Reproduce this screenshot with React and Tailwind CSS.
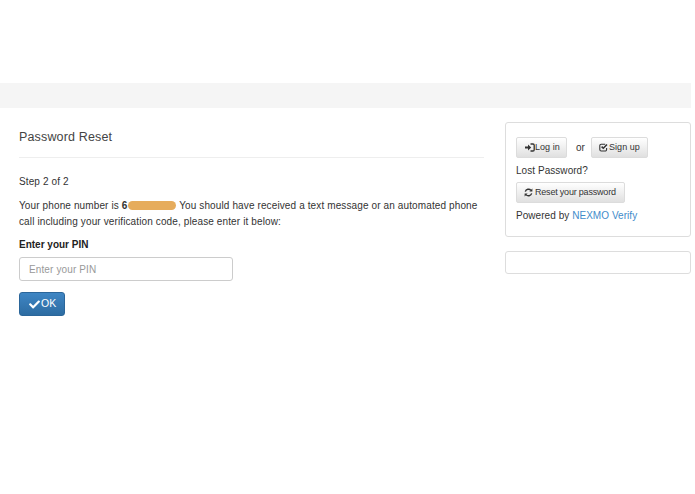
import React from "react";
import { FaCheck } from "react-icons/fa";

const grayBtn =
  "inline-flex items-center whitespace-nowrap h-[21px] rounded-[2px] border border-[#dcdcdc] bg-gradient-to-b from-[#ffffff] to-[#e0e0e0] text-[9px] text-[#333333]";

const LogInIcon = () => (
  <svg width="10" height="9" viewBox="0 0 10 9" fill="none" stroke="#333333" className="shrink-0">
    <path d="M5.5 1H8a1.2 1.2 0 0 1 1.2 1.2v4.6A1.2 1.2 0 0 1 8 8H5.5" strokeWidth="1.3" />
    <path d="M0 3.4h3V1.4l3.2 3.1L3 7.6V5.6H0z" fill="#333333" stroke="none" />
  </svg>
);

const EditCheckIcon = () => (
  <svg width="9" height="9" viewBox="0 0 9 9" fill="none" stroke="#333333" className="shrink-0">
    <path d="M6.2 1.2H2.2A1.4 1.4 0 0 0 .8 2.6v4a1.4 1.4 0 0 0 1.4 1.4h4a1.4 1.4 0 0 0 1.4-1.4V5" strokeWidth="1.1" />
    <path d="M2.6 3.6 4.3 5.3 8 1.4" strokeWidth="1.5" />
  </svg>
);

const RefreshIcon = () => (
  <svg width="9" height="9" viewBox="0 0 9 9" fill="none" stroke="#333333" className="shrink-0">
    <path d="M1.3 3.6A3.3 3.3 0 0 1 7 2.4" strokeWidth="1.4" />
    <path d="M7.7 5.4A3.3 3.3 0 0 1 2 6.6" strokeWidth="1.4" />
    <path d="M8.4.6v3H5.4z" fill="#333333" stroke="none" />
    <path d="M.6 8.4v-3h3z" fill="#333333" stroke="none" />
  </svg>
);

const App = () => {
  return (
    <div className="min-h-[494px] w-[691px] bg-white font-['Liberation_Sans',Arial,sans-serif] text-[#333333] text-[10px] tracking-[0.12px]">
      <div className="h-[83px]" />
      <div className="h-[25px] bg-[#f5f5f5]" />

      <div className="flex pt-[14px]">
        <div className="w-[465px] ml-[19px] mr-[21px]">
          <h1 className="text-[12.5px] leading-[15px] pb-[12px] mt-[8px] border-b border-[#eeeeee] text-[#444444] tracking-[0.15px]">
            Password Reset
          </h1>
          <p className="mt-[16px] leading-[16px]">Step 2 of 2</p>
          <p className="mt-[8px] leading-[16px]">
            Your phone number is <b>6</b>
            <span className="inline-block w-[48px] h-[9px] ml-[1px] align-[-1px] rounded-full bg-[#e6ac5c]" />{" "}
            You should have received a text message or an automated phone call including your verification code, please enter it below:
          </p>
          <label className="block mt-[7px] font-bold leading-[16px] text-[10px] tracking-normal text-[#222222]">
            Enter your PIN
          </label>
          <input
            placeholder="Enter your PIN"
            className="block mt-[4px] w-[214px] h-[24px] px-[9px] rounded-[3px] border border-[#cccccc] bg-white text-[10px] placeholder:text-[#999999] outline-none"
          />
          <button className="mt-[11px] flex items-center gap-[1px] w-[46px] h-[24px] pl-[9px] rounded-[3px] border border-[#2b669a] bg-gradient-to-b from-[#3f86c4] to-[#2d6ca2] text-white text-[10.5px]">
            <FaCheck size={11} />
            OK
          </button>
        </div>

        <div className="w-[186px] flex flex-col gap-[14px] tracking-[0.05px]">
          <div className="h-[115px] rounded-[3px] border border-[#dddddd] px-[10px] pt-[14px]">
            <div className="flex items-center">
              <button className={grayBtn + " w-[51px] pl-[8px]"}>
                <LogInIcon />
                Log in
              </button>
              <span className="ml-[9px] mr-[6px]">or</span>
              <button className={grayBtn + " w-[57px] pl-[7px] gap-[1px]"}>
                <EditCheckIcon />
                Sign up
              </button>
            </div>
            <p className="mt-[6px] leading-[14px]">Lost Password?</p>
            <button className={grayBtn + " mt-[4px] w-[109px] pl-[7px] gap-[2px] text-[8.5px] tracking-[-0.2px]"}>
              <RefreshIcon />
              Reset your password
            </button>
            <p className="mt-[6px] leading-[14px]">
              Powered by <a className="text-[#428bca]">NEXMO Verify</a>
            </p>
          </div>
          <div className="h-[23px] rounded-[3px] border border-[#dddddd]" />
        </div>
      </div>
    </div>
  );
};

export default App;
